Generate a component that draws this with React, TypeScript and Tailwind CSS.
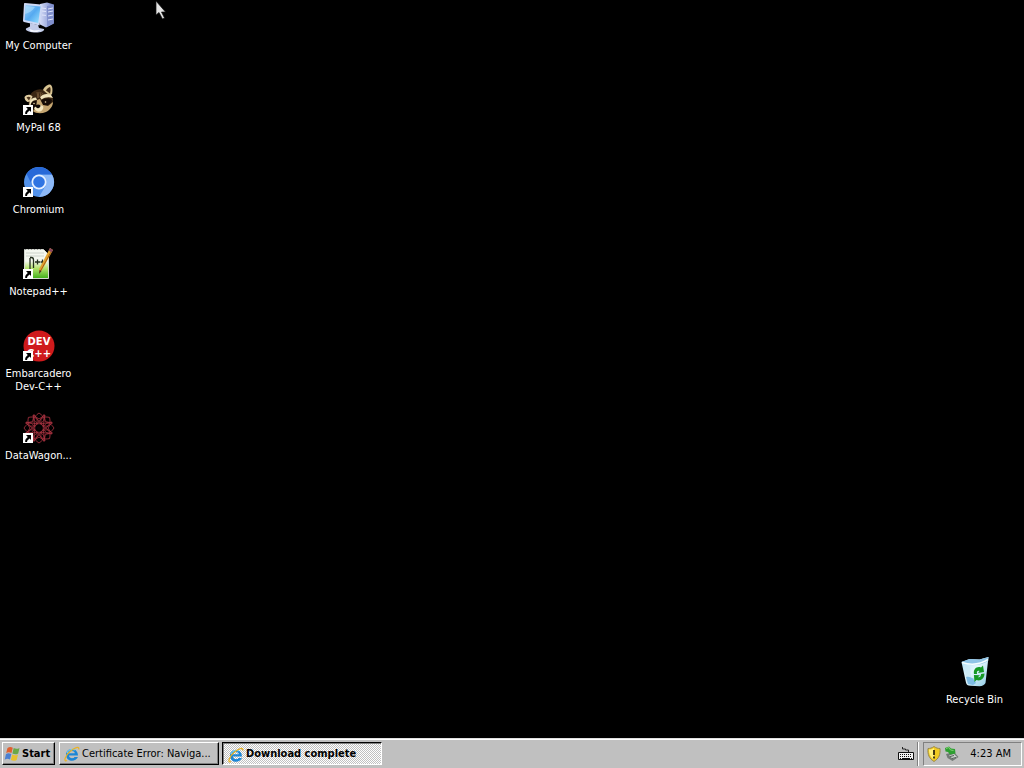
import React from "react";

function ShortcutArrow() {
  return (
    <g>
      <path d="M0 21h10v10H0z" fill="#fff" />
      <path d="M3 23h5v5l-1.400-1.400L4.400 28.400 4 30H2.200c-.2-2 .6-3.400 2.600-5z" fill="#000" />
    </g>
  );
}

function ComputerIcon() {
  return (
    <svg viewBox="0 0 32 32" className="size-8" aria-hidden="true">
      <defs>
        <linearGradient id="screen" x1="0" y1="0" x2="1" y2="1">
          <stop offset="0" stopColor="#9fd2fb" />
          <stop offset=".5" stopColor="#55a9f0" />
          <stop offset="1" stopColor="#9ae4ff" />
        </linearGradient>
        <linearGradient id="tower" x1="0" y1="0" x2="1" y2="0">
          <stop offset="0" stopColor="#d3daf6" />
          <stop offset=".5" stopColor="#a3b0e0" />
          <stop offset="1" stopColor="#6f7fc0" />
        </linearGradient>
      </defs>
      <path d="M17 2l7-1.500 7 2v19l-8 4-6-3z" fill="url(#tower)" />
      <path d="M24 4v21l6.500-3.500V3z" fill="#8190cd" />
      <path d="M19 6l4 .6M19 9l4 .6M19 13l4 .4M25 7l5-1M25 10l5-1M25 14l5-1M25 18l5-1" stroke="#dfe5fb" strokeWidth="1" />
      <path d="M7 21l8 2 1 3 5 1c1 2-4 4-10 3.500-5-.4-9-2-8-4l4-2z" fill="#c3cce9" />
      <path d="M6 27l5 1.500 7-.5-4 2-6-.3z" fill="#f8faff" />
      <path d="M2 1L18 2.500c1 0 1.500.6 1.400 1.500L16.500 23.500 1 20c-.7-.2-1-.6-1-1.200L1 2c0-.7.400-1 1-1z" fill="#cdd8f5" />
      <path d="M2.600 3L17.500 4.500l-2.300 16.500L1.600 18z" fill="url(#screen)" />
      <path d="M3 4l9 1C9 9 6 11 2 12z" fill="#bde7ff" opacity=".5" />
    </svg>
  );
}

function RaccoonIcon() {
  return (
    <svg viewBox="0 0 32 32" className="size-8" aria-hidden="true">
      <path d="M7 11c3-5 9-7 14-5 5 1 8 5 9 9 .5 5-3 10-9 13-5 2-11 1-14-2-2-4-2-10 0-15z" fill="#3b2713" />
      <path d="M1.500 13c2-3 6-3 8-.5l-2 5-3 .5c-2-1-3-3-3-5z" fill="#e0cda0" />
      <path d="M3.500 13.500c1-1 3-1 4 0L6 16.500z" fill="#4a321b" />
      <path d="M20 6c1-3 4-5.500 7-5.500 2.500 1 3 5 2 9.500l-2 2z" fill="#d8c391" />
      <path d="M23 6.500c1-2 2.500-3 4-3.500 1 2 .6 4 0 6.500z" fill="#3f2914" />
      <path d="M7 17c1-2 3-3.500 6-3.500l1 2.500c-3 0-5 1-6 3.500l-1 4c-1-2-1-4 0-6.500zM17 13c3-3 7-4 11-2l2 3c-4-1.500-8-1-11.500 1.500z" fill="#f1e4bc" />
      <path d="M8 21c0-3 3-5 6-4l1 4-3 4c-2 .5-4-1-4-4zM18 17c3-3 8-3 11-1-.5 4-4 6-9 5z" fill="#160c06" />
      <path d="M14 16l3-1 3 6 5 1 5-4c0 4-3 8-7 10-5 2-10 1.500-13-1l3-3z" fill="#c5a671" />
      <path d="M11 24c2-2 4-3 6-3l3 1c1 2-.5 5-3 5.500-3 .6-5-1-6-3.500z" fill="#f4e6bf" />
      <path d="M12.500 21.500c1.500-1.500 4-1.500 5 0 0 1.500-1 2.500-2.500 2.700-1.500-.2-2.500-1.200-2.500-2.700z" fill="#100906" />
      <path d="M14 8l1 6 1-6M18 8l-1 5 3-4" fill="none" stroke="#856440" strokeWidth=".7" />
      <circle cx="11" cy="19.500" r=".8" fill="#e9d3a4" />
      <circle cx="22.500" cy="18" r=".8" fill="#e9d3a4" />
      <ShortcutArrow />
    </svg>
  );
}

function ChromiumIcon() {
  return (
    <svg viewBox="0 0 32 32" className="size-8" aria-hidden="true">
      <circle cx="16" cy="16" r="15" fill="#5292eb" />
      <path d="M16 8.500h13A15 15 0 0 1 16 31L22.500 20z" fill="#8db9f7" />
      <path d="M16 8.500h13A15 15 0 0 0 3.500 7.800L9.500 20A7.500 7.500 0 0 1 16 8.500z" fill="#2869d8" />
      <circle cx="16" cy="16" r="7.500" fill="#e6f0ff" />
      <circle cx="16" cy="16" r="5.800" fill="#2f74e2" />
      <ShortcutArrow />
    </svg>
  );
}

function NotepadIcon() {
  return (
    <svg viewBox="0 0 32 32" className="size-8" aria-hidden="true">
      <defs>
        <linearGradient id="note" x1="0" y1="0" x2="0" y2="1">
          <stop offset=".4" stopColor="#f4f7ef" />
          <stop offset=".65" stopColor="#b4e36c" />
          <stop offset="1" stopColor="#3eae18" />
        </linearGradient>
      </defs>
      <path d="M1.500 1.500h19l5 5v24h-24z" fill="url(#note)" stroke="#d5d9d1" />
      <path d="M2 1.500h18" stroke="#999" strokeWidth="1" strokeDasharray="1 2" />
      <path d="M3 5h18M3 8h18" stroke="#ccd2ca" />
      <path d="M7 21V10M7 9.500h1.500c1.500 0 2 1 2 2.500v8M12 14h5M14.500 11.500v5M17.500 14h4M19.500 11.500v5" fill="none" stroke="#25301f" strokeWidth="1.300" />
      <path d="M27 0l3 2-11 20-3 3 .4-4.500z" fill="#e3a22e" />
      <path d="M27 0l3 2-1.400 2.500-3-2z" fill="#8b4660" />
      <path d="M28 4L17.500 23" stroke="#a56119" />
      <path d="M16.500 22l2 1L16 26z" fill="#48341d" />
      <ShortcutArrow />
    </svg>
  );
}

function DevIcon() {
  return (
    <svg viewBox="0 0 32 32" className="size-8" aria-hidden="true">
      <circle cx="16" cy="16" r="15.500" fill="#cf1a1c" />
      <text x="16" y="15" textAnchor="middle" fontFamily="DejaVu Sans, sans-serif" fontWeight="700" fontSize="10" fill="#fff">DEV</text>
      <text x="16" y="27" textAnchor="middle" fontFamily="DejaVu Sans, sans-serif" fontWeight="700" fontSize="10" fill="#fff">C++</text>
      <ShortcutArrow />
    </svg>
  );
}

const petalAngles = [0, 45, 90, 135, 180, 225, 270, 315];

function WagonIcon() {
  return (
    <svg viewBox="0 0 32 32" className="size-8" aria-hidden="true">
      <g fill="none" stroke="#a83240" strokeWidth=".8">
        {petalAngles.map((angle) => (
          <g key={angle} transform={`rotate(${angle} 16 16)`}>
            <path d="M16 12C9 9 10 5 16 1c6 4 7 8 0 11" />
            <path d="M12 15L10 3l6 4 6-4-2 12" />
          </g>
        ))}
      </g>
      <circle cx="16" cy="16" r="2" fill="#090204" />
      <ShortcutArrow />
    </svg>
  );
}

function RecycleIcon() {
  return (
    <svg viewBox="0 0 32 32" className="size-8" aria-hidden="true">
      <defs>
        <linearGradient id="bin" x1="0" y1="0" x2="1" y2="1">
          <stop offset="0" stopColor="#a9dcf4" />
          <stop offset=".45" stopColor="#e3f6fc" />
          <stop offset="1" stopColor="#8fcbe6" />
        </linearGradient>
      </defs>
      <path d="M2.500 6l8-3 10 .5L29.500 1l-3 26c-1 2-3 3-6 3.300l-9-.5c-3 0-4-1-4.500-3z" fill="url(#bin)" />
      <path d="M2.500 6l8-3 10 .5L29.500 1l-.5 4c-5 3-10 4-16 4z" fill="#8fc4e6" />
      <path d="M3 6.500c8 2.500 18 2 26-3" fill="none" stroke="#f5feff" strokeWidth="1.500" />
      <path d="M5 9l3 17 5 2-2-17z" fill="#c9e8f5" opacity=".8" />
      <path d="M7 21c4-1 8 1 10 6l-3 2-5-1z" fill="#5ea9de" opacity=".7" />
      <g fill="#169a25">
        <path d="M15 18c-1-5 3-8 7-6.500l2-2 1 6.500-6 1 1.500-2c-2-.6-3 .8-2.500 3z" />
        <path d="M25.500 17.500c0 5-4 8-8 6.500l-2 2-.6-7 6 .2-2 2c2 .6 3-.8 3.200-3.200z" />
      </g>
    </svg>
  );
}

function WindowsLogo() {
  return (
    <svg viewBox="0 0 18 16" className="h-4 w-[18px] shrink-0" aria-hidden="true">
      <path d="M3.500 2c2-1.400 3.500-1.200 5.300-.3L7.500 7C5.700 6 4 6 2.200 7z" fill="#e0602f" />
      <path d="M9.700 2.100c1.800 1 3.800 1 5.800-.2L14.200 7.500c-2 1.200-4 1-5.800 0z" fill="#6aa848" />
      <path d="M2 8c1.800-1.200 3.500-1 5.300 0L6 13.500c-2-1-3.500-1-5.300.2z" fill="#4b80d2" />
      <path d="M8.200 8.500c1.800 1 3.800 1 5.800-.1l-1.300 5.500c-2 1.200-4 1-5.800 0z" fill="#e8c12e" />
    </svg>
  );
}

function ExplorerIcon() {
  return (
    <svg viewBox="0 0 16 16" className="size-4 shrink-0" aria-hidden="true">
      <path d="M14 9.500H5c.2 3 4.200 3.500 5.500 1.500H14c-2 5-11 5.500-12-1.500C1.500 1.500 13.500.5 14 9.500zM5 7.200h5.800C10.500 4.200 5.500 4.200 5 7.200z" fill="#1c86d6" fillRule="evenodd" />
      <path d="M3 7C4 4 8 2.500 11 4" stroke="#70d2fb" fill="none" strokeWidth="1.200" />
      <path d="M3 14.500C-.5 16.500.5 10 6 5.500 10.500 1.500 15.500-.3 14.800 3.500" fill="none" stroke="#e9b326" strokeWidth="1.300" />
    </svg>
  );
}

function KeyboardIcon() {
  return (
    <svg viewBox="0 0 16 16" className="size-4" aria-hidden="true">
      <path d="M4.500 1v2h3v1h3v2" fill="none" stroke="#222" />
      <path d="M.5 6.500h15v7H.5z" fill="#f2f2f2" stroke="#111" />
      <path d="M2 8.500h12M2 10.500h12" stroke="#111" strokeDasharray="1 1" />
      <path d="M2 12.500h1M4 12.500h8M13 12.500h1" stroke="#111" />
    </svg>
  );
}

function ShieldIcon() {
  return (
    <svg viewBox="0 0 16 16" className="size-4" aria-hidden="true">
      <path d="M8 .5c2 1.500 4 2 6 2 .5 6-1 10-6 13-5-3-6.500-7-6-13 2 0 4-.5 6-2z" fill="#f0ca22" stroke="#9b8a4c" />
      <path d="M8 2c-1.500 1-3 1.500-5 1.600 0 4 1 7.500 5 10z" fill="#fff07a" />
      <path d="M8 4v5M8 10.500v2" stroke="#332a10" strokeWidth="1.800" />
    </svg>
  );
}

function HardwareIcon() {
  return (
    <svg viewBox="0 0 16 16" className="size-4" aria-hidden="true">
      <path d="M2 8l8-2 4.500 5-6 4-5-3z" fill="#737b76" />
      <path d="M5 9.500l5-1.500 3 3-4 2z" fill="#cdd4d0" />
      <path d="M6 10.500l4-1M8 12.500l4-1" stroke="#525c57" />
      <path d="M1 2l4-1.500 2 2 4 .5.500 4.500L6 8.500 4 6 1.500 5.500z" fill="#2d9f31" />
      <path d="M2 2.500l3-1 1.500 2.500 3 .5" stroke="#7bd06e" fill="none" />
    </svg>
  );
}

function DesktopItem({ label, icon }: { label: string; icon: React.ReactNode }) {
  return (
    <button type="button" className="flex h-[82px] w-[77px] flex-col items-center gap-[5px] text-[11px] leading-[13px] text-white">
      {icon}
      <span className="px-1">{label}</span>
    </button>
  );
}

const raised = "border border-t-white border-l-white border-r-black border-b-black shadow-[inset_-1px_-1px_0_#808080]";
const sunken = "border border-t-black border-l-black border-r-white border-b-white shadow-[inset_1px_1px_0_#808080]";

export default function App() {
  return (
    <div className="flex min-h-screen flex-col bg-black font-['DejaVu_Sans_Condensed','DejaVu_Sans',sans-serif] select-none">
      <main className="relative flex grow items-start justify-between">
        <div className="flex flex-col pt-[2px]">
          <DesktopItem label="My Computer" icon={<ComputerIcon />} />
          <DesktopItem label="MyPal 68" icon={<RaccoonIcon />} />
          <DesktopItem label="Chromium" icon={<ChromiumIcon />} />
          <DesktopItem label="Notepad++" icon={<NotepadIcon />} />
          <DesktopItem label="Embarcadero Dev-C++" icon={<DevIcon />} />
          <DesktopItem label="DataWagon..." icon={<WagonIcon />} />
        </div>
        <div className="self-end pr-[11px]">
          <DesktopItem label="Recycle Bin" icon={<RecycleIcon />} />
        </div>
        <svg viewBox="0 0 12 20" className="absolute top-px left-[155px] h-5 w-3" aria-hidden="true">
          <path d="M1 0v14l3-2.500 3.500 6.500 2-1-3-6h4z" fill="#e4e4e4" stroke="#111" strokeWidth=".7" />
        </svg>
      </main>
      <footer className="flex h-[30px] items-center border-t border-[#dfdfdf] bg-[#c0c0c0] px-[2px] text-[11px] text-black shadow-[inset_0_1px_0_#fff]">
        <button type="button" className={`flex h-[23px] w-[53px] items-center pt-px pl-px text-[11px] font-bold ${raised}`}>
          <WindowsLogo />
          Start
        </button>
        <nav className="ml-1 flex grow gap-[3px]" aria-label="Open windows">
          <button type="button" className={`flex h-[23px] w-[160px] items-center gap-[2px] pt-px pl-1 whitespace-nowrap ${raised}`}>
            <ExplorerIcon />
            Certificate Error: Naviga...
          </button>
          <button
            type="button"
            aria-pressed="true"
            className={`flex h-[23px] w-[160px] items-center gap-[2px] bg-[repeating-conic-gradient(#ffffff_0_25%,#c0c0c0_0_50%)] bg-size-[2px_2px] pt-[2px] pl-[5px] font-bold whitespace-nowrap ${sunken}`}
          >
            <ExplorerIcon />
            Download complete
          </button>
        </nav>
        <button type="button" className="mr-[3px]" aria-label="Keyboard">
          <KeyboardIcon />
        </button>
        <div className="mr-1 h-6 w-[2px] border-l border-[#808080] bg-white" />
        <div className="flex h-6 items-center gap-[2px] border border-t-[#808080] border-r-white border-b-white border-l-[#808080] pt-px pr-[10px] pl-[2px]">
          <ShieldIcon />
          <HardwareIcon />
          <time className="pl-2">4:23 AM</time>
        </div>
      </footer>
    </div>
  );
}
